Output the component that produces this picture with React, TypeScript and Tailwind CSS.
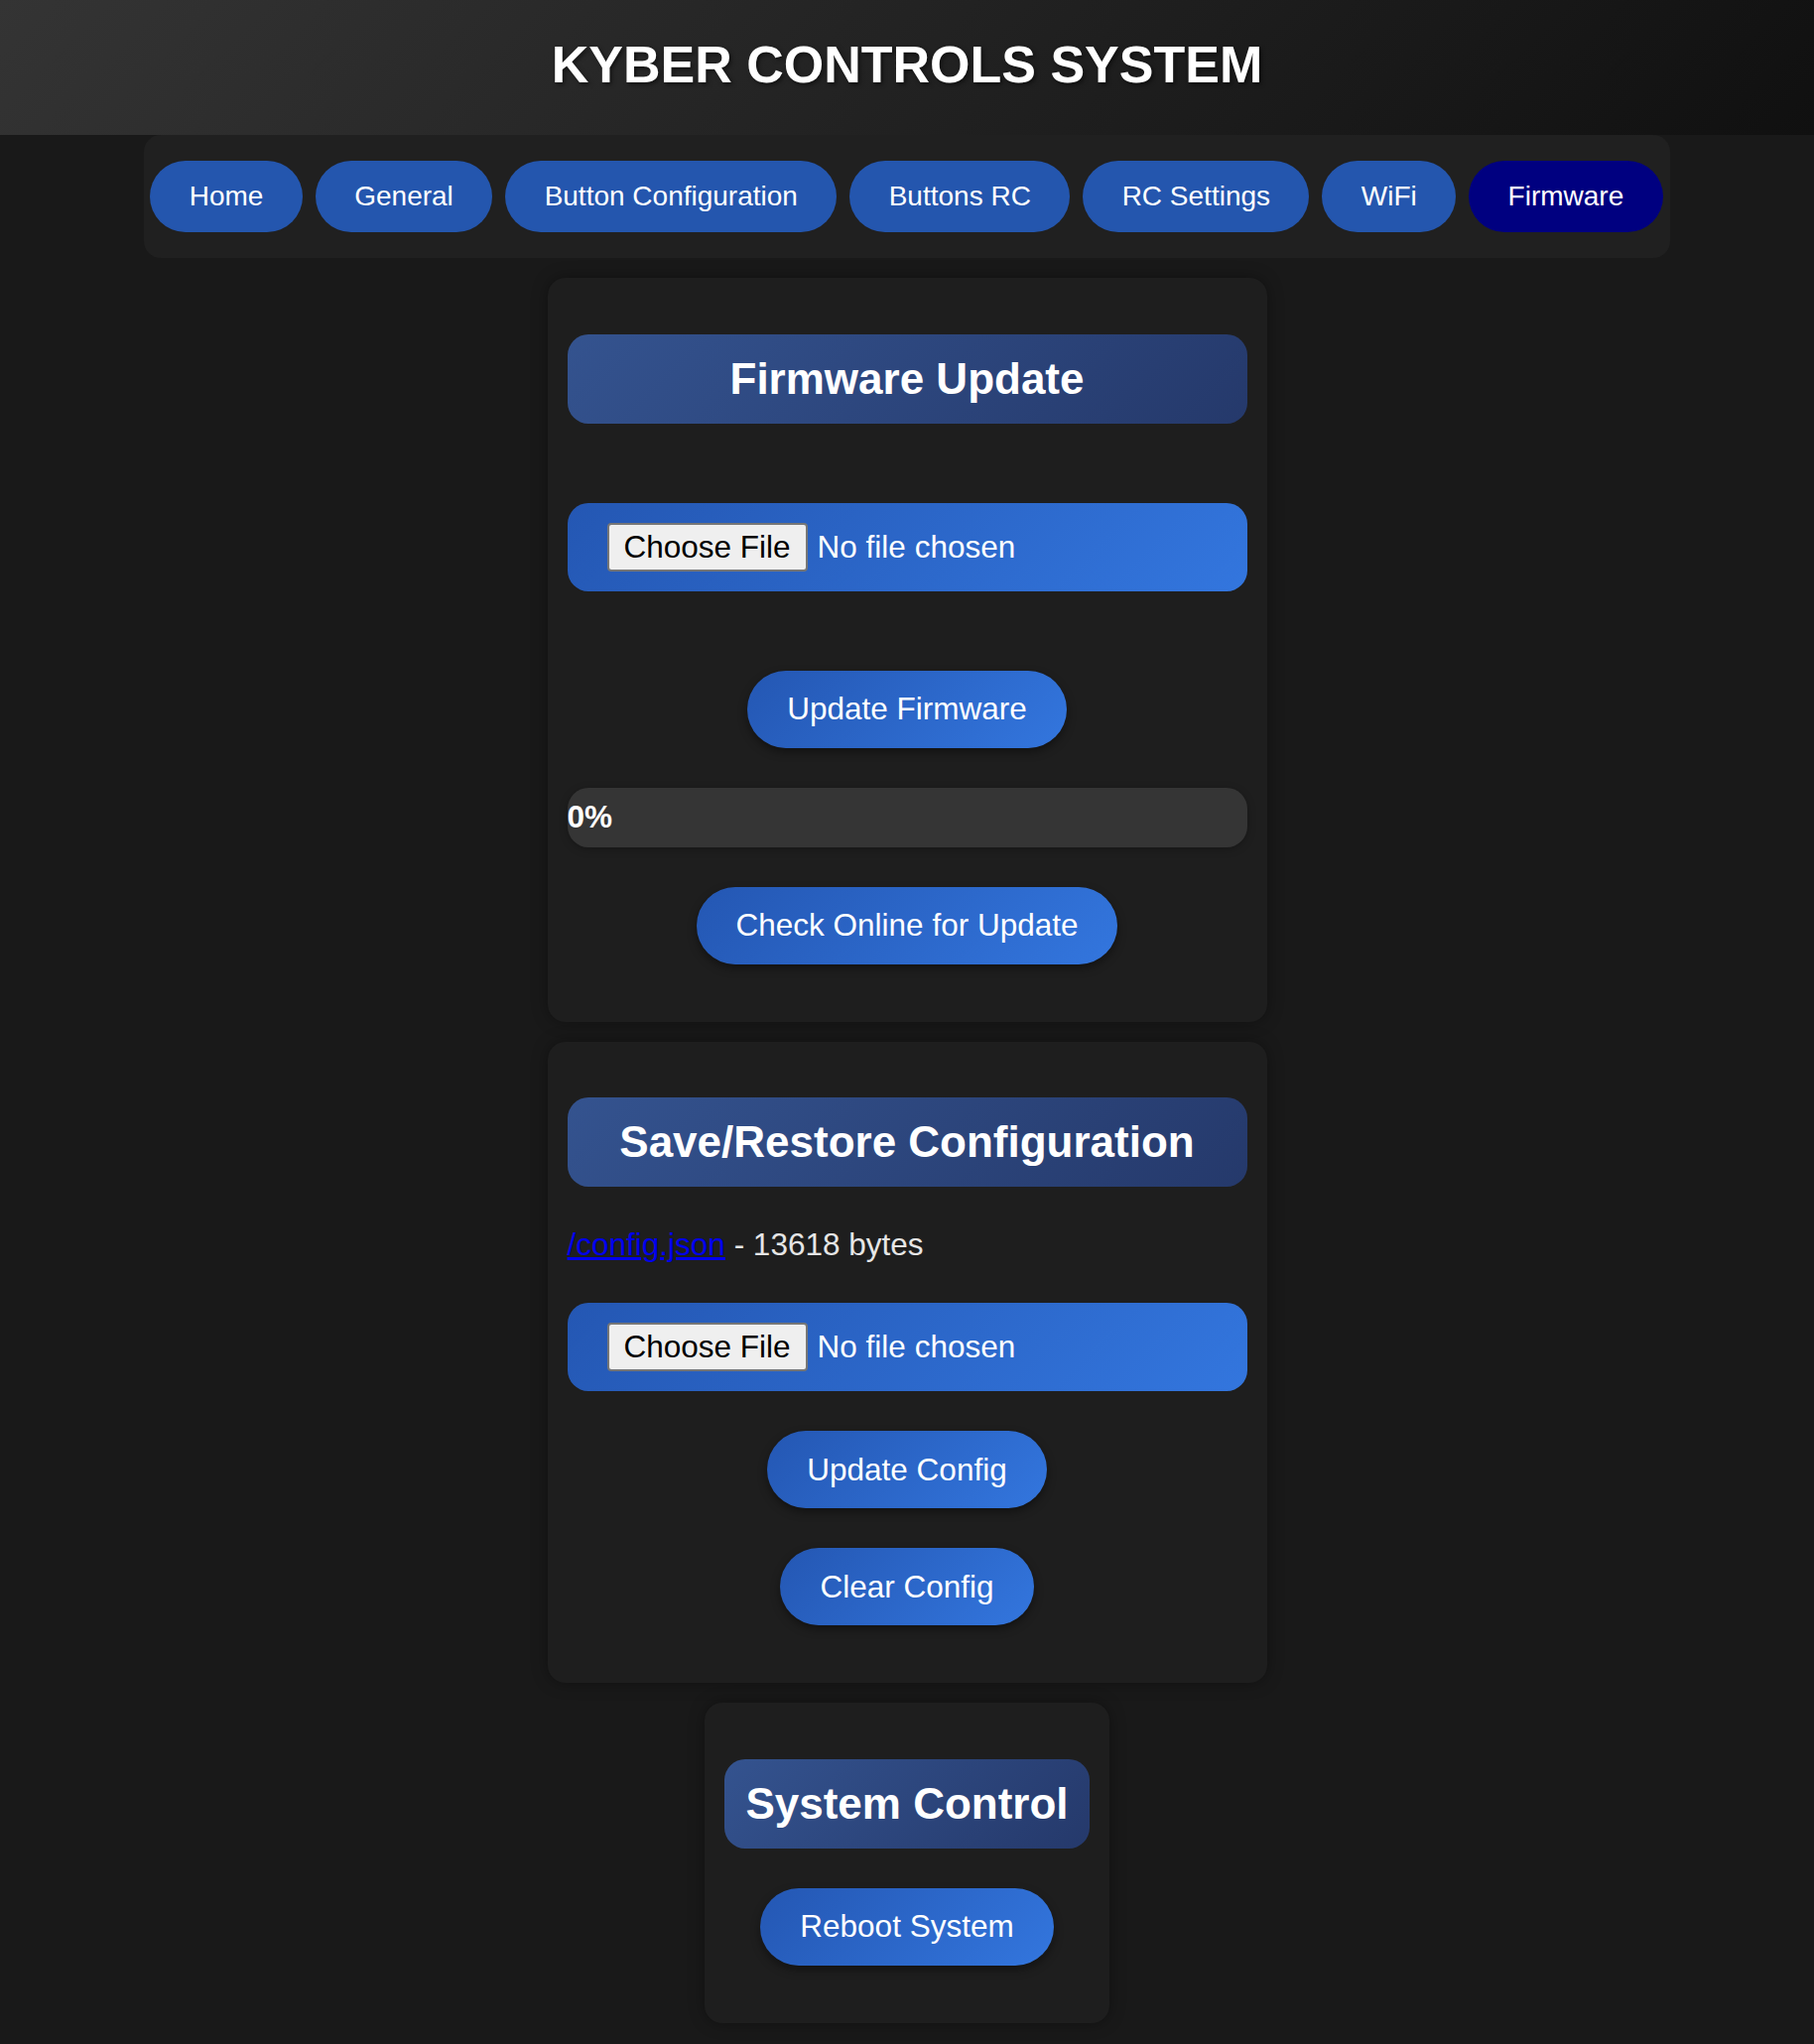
import React from "react";

const tabs = ["Home", "General", "Button Configuration", "Buttons RC", "RC Settings", "WiFi", "Firmware"];

const btnCls =
  "rounded-full px-10 py-[20.5px] text-[31.5px] text-white bg-[linear-gradient(135deg,#2457b3,#3376de)] shadow-[0_4px_10px_rgba(0,0,0,0.4)]";

const SectionTitle = ({ children }: { children: React.ReactNode }) => (
  <h2 className="mt-[36.5px] w-full rounded-[21px] px-[21px] py-5 text-center text-[44px] font-bold text-white bg-[linear-gradient(135deg,#34538f,#25396b)]">
    {children}
  </h2>
);

const FileBox = ({ className = "" }: { className?: string }) => (
  <div
    className={`flex w-full items-center gap-[10px] rounded-[21px] px-10 py-5 bg-[linear-gradient(135deg,#2457b3,#3376de)] ${className}`}
  >
    <span className="rounded-[4px] border-2 border-[#767676] bg-[#efefef] px-[15px] py-[4px] text-[31.5px] text-black">
      Choose File
    </span>
    <span className="text-[31.5px] text-white">No file chosen</span>
  </div>
);

const Card = ({ children, wide }: { children: React.ReactNode; wide?: boolean }) => (
  <section
    className={`flex flex-col items-center rounded-[18px] bg-[#1e1e1e] p-5 shadow-[0_0_16px_rgba(0,0,0,0.35)] ${
      wide ? "w-[725px]" : "w-fit"
    }`}
  >
    {children}
  </section>
);

export default function App() {
  const active = "Firmware";
  return (
    <div className="min-h-screen bg-[#191919] pb-5 font-['Liberation_Sans',Arial,sans-serif] leading-[normal] text-white">
      {/* header */}
      <header className="flex h-[136px] items-center justify-center pb-[6px] bg-[linear-gradient(135deg,#343434,#101010)]">
        <h1 className="text-[52px] font-bold text-white [text-shadow:2px_2px_4px_rgba(0,0,0,0.5)]">
          KYBER CONTROLS SYSTEM
        </h1>
      </header>

      {/* nav */}
      <nav className="mx-auto flex w-fit gap-[13px] rounded-[17px] bg-[#202020] py-[26px] pl-[6px] pr-[7px]">
        {tabs.map((t) => (
          <button
            key={t}
            className={`rounded-full px-[39.4px] py-5 text-[28px] text-white ${
              t === active ? "bg-[#000080]" : "bg-[#2456ae]"
            }`}
          >
            {t}
          </button>
        ))}
      </nav>

      <main className="mt-5 flex flex-col items-center gap-5">
        {/* firmware */}
        <Card wide>
          <SectionTitle>Firmware Update</SectionTitle>
          <FileBox className="mt-20" />
          <button className={`${btnCls} mt-20`}>Update Firmware</button>
          <div className="mt-10 flex h-[60px] w-full items-center rounded-[21px] bg-[#353535] shadow-[0_2px_8px_rgba(0,0,0,0.25)]">
            <span className="text-[31.5px] font-bold text-white">0%</span>
          </div>
          <button className={`${btnCls} mb-[38px] mt-10`}>Check Online for Update</button>
        </Card>

        {/* config */}
        <Card wide>
          <SectionTitle>Save/Restore Configuration</SectionTitle>
          <p className="mt-10 w-full text-[31.5px] text-[#e6e6e6]">
            <a href="#" className="text-[#0000ee] underline">
              /config.json
            </a>{" "}
            - 13618 bytes
          </p>
          <FileBox className="mt-10" />
          <button className={`${btnCls} mt-10`}>Update Config</button>
          <button className={`${btnCls} mb-[38px] mt-10`}>Clear Config</button>
        </Card>

        {/* system */}
        <Card>
          <SectionTitle>System Control</SectionTitle>
          <button className={`${btnCls} mb-[38px] mt-10`}>Reboot System</button>
        </Card>
      </main>
    </div>
  );
}
